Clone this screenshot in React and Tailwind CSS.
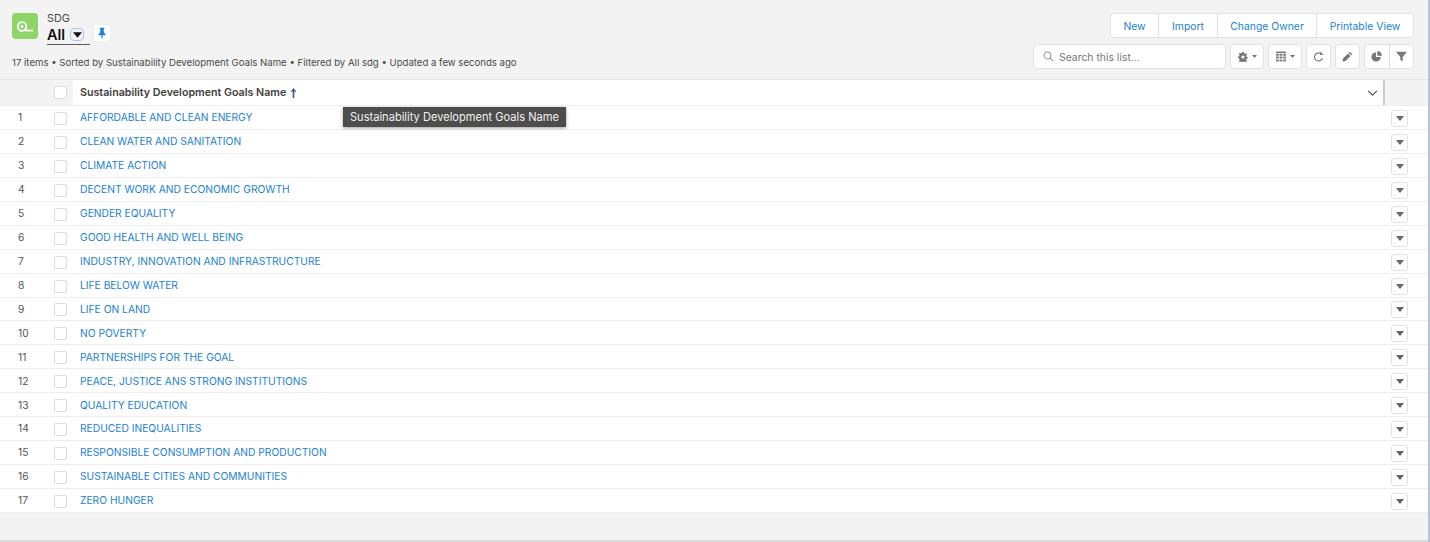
import React from "react";

const goals = [
  "AFFORDABLE AND CLEAN ENERGY",
  "CLEAN WATER AND SANITATION",
  "CLIMATE ACTION",
  "DECENT WORK AND ECONOMIC GROWTH",
  "GENDER EQUALITY",
  "GOOD HEALTH AND WELL BEING",
  "INDUSTRY, INNOVATION AND INFRASTRUCTURE",
  "LIFE BELOW WATER",
  "LIFE ON LAND",
  "NO POVERTY",
  "PARTNERSHIPS FOR THE GOAL",
  "PEACE, JUSTICE ANS STRONG INSTITUTIONS",
  "QUALITY EDUCATION",
  "REDUCED INEQUALITIES",
  "RESPONSIBLE CONSUMPTION AND PRODUCTION",
  "SUSTAINABLE CITIES AND COMMUNITIES",
  "ZERO HUNGER",
];

const Caret = ({ className = "" }) => (
  <svg viewBox="0 0 10 6" className={className} fill="currentColor"><path d="M0 0h10L5 6z" /></svg>
);

const Box = () => <div className="w-[13px] h-[13px] bg-white border border-[#dddddd] rounded-[2px]" />;

const IconBtn = ({ children, className = "" }) => (
  <div className={`h-[25px] bg-white border border-[#e2e2e2] rounded-[4px] flex items-center justify-center text-[#777777] ${className}`}>{children}</div>
);

export default function App() {
  return (
    <div className="w-[1430px] h-[542px] overflow-hidden bg-[#f3f3f3] flex font-['Inter','Liberation_Sans',sans-serif] text-[#3e3e3c]">
      <div className="flex-1 flex flex-col min-w-0">
        <header className="h-[80px] shrink-0 flex justify-between border-b border-[#e6e6e6]">
          <div className="pl-3 pt-[13px]">
            <div className="flex">
              <div className="w-[26px] h-[26px] rounded-[4px] bg-[#8fd468] flex items-center justify-center">
                <svg viewBox="0 0 26 26" className="w-[26px] h-[26px]" fill="none" stroke="white">
                  <circle cx="10" cy="13.500" r="4.300" strokeWidth="1.800" />
                  <circle cx="10" cy="13.500" r="1.200" fill="white" strokeWidth="0.500" />
                  <path d="M13 17.500h8" strokeWidth="1.800" />
                </svg>
              </div>
              <div className="ml-[9px]">
                <div className="text-[10.800px] leading-[12px] text-[#4a4a4a] h-[12px]">SDG</div>
                <div className="flex items-center h-[19px] w-[43px] border-b border-[#5a5a5a] box-content">
                  <span className="text-[14.500px] font-semibold leading-[18px] text-[#111111]">All</span>
                  <span className="ml-[5px] w-[14px] h-[13px] rounded-[4px] border border-[#a8c8ee] flex items-center justify-center text-[#111111]">
                    <Caret className="w-[9px] h-[6px]" />
                  </span>
                </div>
              </div>
              <div className="ml-[3px] mt-[11px] w-[18px] h-[18px] bg-white rounded-[3px] border border-[#eeeeee] flex items-center justify-center">
                <svg viewBox="0 0 12 16" className="w-[8px] h-[12px]" fill="#1b7fdc">
                  <path d="M2.500 0h7v1.500L8.600 2.400V7l2.600 3v1.200H6.900V16H5.100v-4.800H.800V10l2.600-3V2.400l-.900-.900z" />
                </svg>
              </div>
            </div>
            <p className="mt-[11px] text-[9.600px] leading-[14px] text-[#4a4a4a] whitespace-nowrap">
              17 items • Sorted by Sustainability Development Goals Name • Filtered by All sdg • Updated a few seconds ago
            </p>
          </div>
          <div className="pt-[13px] pr-[14px] flex flex-col items-end gap-[5px]">
            <div className="h-[25px] flex bg-white border border-[#e2e2e2] rounded-[4px] text-[10.400px] text-[#1b7fd4] pt-[2px]">
              <div className="w-[48px] flex items-center justify-center border-r border-[#e2e2e2] -mt-[2px] pt-[2px]">New</div>
              <div className="w-[59px] flex items-center justify-center border-r border-[#e2e2e2] -mt-[2px] pt-[2px]">Import</div>
              <div className="w-[99px] flex items-center justify-center border-r border-[#e2e2e2] -mt-[2px] pt-[2px]">Change Owner</div>
              <div className="flex-1 w-[96px] flex items-center justify-center -mt-[2px] pt-[2px]">Printable View</div>
            </div>
            <div className="flex h-[25px] mt-[1px]">
              <div className="w-[193px] h-[25px] bg-white border border-[#e2e2e2] rounded-[4px] flex items-center pl-[9px] pt-[2px] text-[10.400px] text-[#777777]">
                <svg viewBox="0 0 14 14" className="w-[11px] h-[11px] mr-[5px] -mt-[2px]" fill="none" stroke="#9a9a9a" strokeWidth="1.400">
                  <circle cx="5.700" cy="5.700" r="4.400" />
                  <path d="M9 9l4 4" />
                </svg>
                Search this list...
              </div>
              <IconBtn className="w-[34px] ml-[4px] gap-[4px]">
                <svg viewBox="0 0 16 16" className="w-[10px] h-[10px]" fill="#777777">
                  <path fillRule="evenodd" d="M6.600 0h2.800l.400 2.200 1.200.600 2-1 1.600 2.200-1.500 1.600.200 1.400 2 .900v2.400l-2 .900-.300 1.400 1.500 1.600-1.800 2-1.900-1-1.200.500-.400 2.200H6.600l-.500-2.200-1.200-.500-1.900 1-1.800-2 1.500-1.600-.300-1.400-2-.900V7l2-.900.200-1.400L1.100 3.100l1.700-2.100 2 1 1.300-.600zM8 5.500a2.500 2.500 0 100 5 2.500 2.500 0 000-5z" />
                </svg>
                <Caret className="w-[5px] h-[3px]" />
              </IconBtn>
              <IconBtn className="w-[34px] ml-[4px] gap-[4px]">
                <svg viewBox="0 0 12 12" className="w-[10px] h-[11px]" fill="#808080">
                  <path d="M0 0h12v2.200H0zM0 3h3.400v2H0zM4.300 3h3.400v2H4.300zM8.600 3H12v2H8.600zM0 6h3.400v2.500H0zM4.300 6h3.400v2.500H4.300zM8.600 6H12v2.500H8.600zM0 9.500h3.400V12H0zM4.300 9.500h3.400V12H4.300zM8.600 9.500H12V12H8.600z" />
                </svg>
                <Caret className="w-[5px] h-[3px]" />
              </IconBtn>
              <IconBtn className="w-[25px] ml-[4px]">
                <svg viewBox="0 0 14 14" className="w-[11px] h-[11px]" fill="none" stroke="#777777" strokeWidth="1.400">
                  <path d="M11.800 9A5 5 0 112.500 5.500 5 5 0 019.500 3" />
                  <path d="M9 .5v4.500h4.500z" fill="#777777" stroke="none" />
                </svg>
              </IconBtn>
              <IconBtn className="w-[25px] ml-[4px]">
                <svg viewBox="0 0 14 14" className="w-[11px] h-[11px]" fill="#777777">
                  <path d="M10 .800l3.200 3.200-1.500 1.500-3.200-3.200zM7.700 3.100l3.200 3.200-6.400 6.400-4 .800.800-4z" />
                </svg>
              </IconBtn>
              <div className="ml-[4px] h-[25px] w-[50px] flex bg-white border border-[#e2e2e2] rounded-[4px]">
                <div className="flex-1 flex items-center justify-center border-r border-[#e2e2e2]">
                  <svg viewBox="0 0 14 14" className="w-[11px] h-[11px]" fill="#777777">
                    <path d="M6.300 1.500A6 6 0 1012.500 7.700H6.300z" />
                    <path d="M8 0a6 6 0 016 6H8z" />
                  </svg>
                </div>
                <div className="flex-1 flex items-center justify-center">
                  <svg viewBox="0 0 14 14" className="w-[11px] h-[11px]" fill="#777777">
                    <path d="M0 1h14L8.500 7.500V13l-3-1.500v-4z" />
                  </svg>
                </div>
              </div>
            </div>
          </div>
        </header>

        <div className="relative">
          <div className="h-[26px] flex border-b border-[#eeeeee]">
            <div className="w-[54px] shrink-0" />
            <div className="w-[19px] shrink-0 flex items-center"><Box /></div>
            <div className="flex-1 bg-white flex items-center pl-[7px] pr-[5px] pt-px">
              <span className="text-[10.700px] font-semibold text-[#3e3e3c]">Sustainability Development Goals Name</span>
              <svg viewBox="0 0 8 12" className="ml-[4px] w-[7px] h-[10px]" fill="#4a5f80"><path d="M4 0l3.500 4.500H5V12H3V4.500H.5z" /></svg>
              <svg viewBox="0 0 12 8" className="ml-auto w-[11px] h-[7px]" fill="none" stroke="#555555" strokeWidth="1.300"><path d="M1 1l5 5 5-5" /></svg>
            </div>
            <div className="w-[2px] bg-[#c5cad3]" />
            <div className="w-[43px] shrink-0" />
          </div>
          {goals.map((g, i) => (
            <div key={g} className="h-[23.940px] pt-px flex items-center bg-white border-b border-[#eeeeee] text-[10.250px]">
              <div className="w-[54px] shrink-0 pl-[18px] text-[#555555]">{i + 1}</div>
              <div className="w-[26px] shrink-0 flex items-center mt-px"><Box /></div>
              <div className="flex-1 text-[#1b7fd4] whitespace-nowrap">{g}</div>
              <div className="w-[37px] shrink-0 flex items-center mt-px">
                <div className="w-[17px] h-[17px] bg-white border border-[#e2e2e2] rounded-[3px] flex items-center justify-center text-[#666666]">
                  <Caret className="w-[8px] h-[5px]" />
                </div>
              </div>
            </div>
          ))}
          <div className="absolute left-[343px] top-[27px] h-[20px] w-[223px] bg-[#4d4d4b] text-[#f0f0f0] text-[11.100px] flex items-center justify-center shadow-[0_1px_3px_rgba(0,0,0,0.4)] whitespace-nowrap">
            Sustainability Development Goals Name
          </div>
        </div>
        <div className="flex-1 border-b-2 border-[#dcdcdc]" />
      </div>
      <div className="w-[2px] shrink-0 bg-[#b4c4de]" />
    </div>
  );
}
